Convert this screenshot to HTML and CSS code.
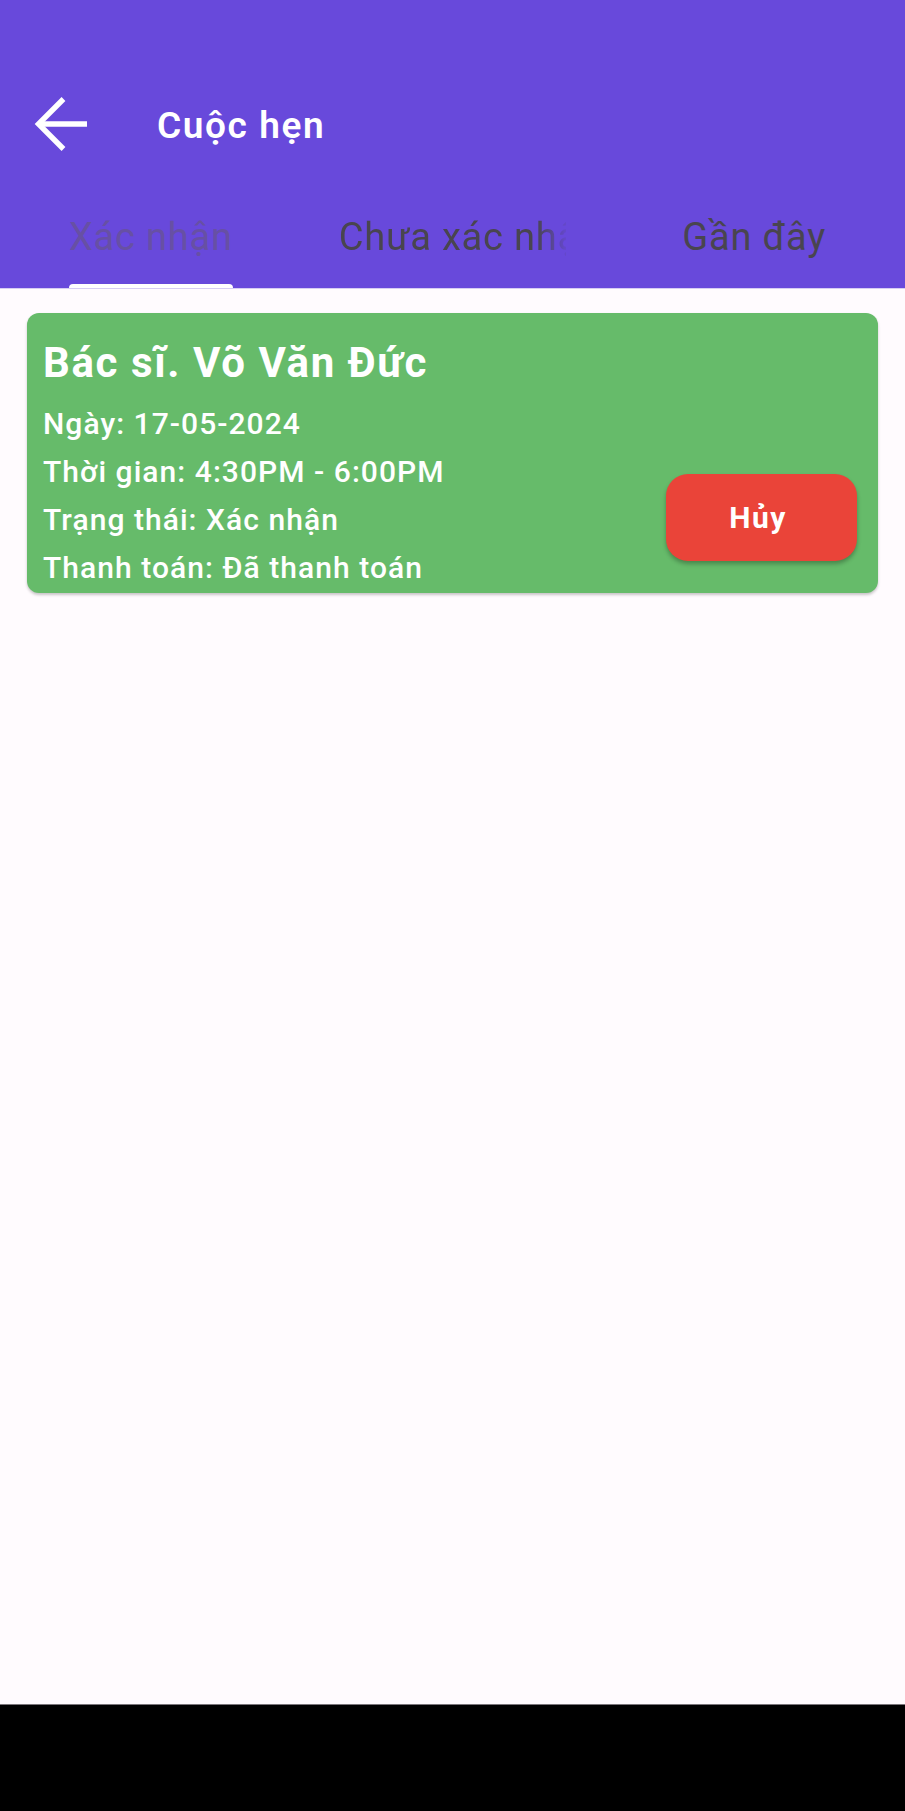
FILE: index.html
```html
<!DOCTYPE html>
<html lang="vi">
<head>
<meta charset="utf-8">
<title>Cuộc hẹn</title>
<link rel="stylesheet" href="styles.css">
</head>
<body>
<div class="screen">
  <header class="appbar">
    <div class="toolbar">
      <svg class="back" width="54" height="54" viewBox="0 0 54 54" aria-hidden="true">
        <path d="M4 27 H53" fill="none" stroke="#fff" stroke-width="5.4"/>
        <path d="M29.5 2 L4.5 27 L29.5 52" fill="none" stroke="#fff" stroke-width="5.4" stroke-linejoin="miter"/>
      </svg>
      <h1 class="title">Cuộc hẹn</h1>
    </div>
    <nav class="tabs">
      <div class="tab active">
        <span class="tab-inner"><span class="label">Xác nhận</span><span class="indicator"></span></span>
      </div>
      <div class="tab">
        <span class="tab-inner"><span class="label fade">Chưa xác nhận</span><span class="indicator"></span></span>
      </div>
      <div class="tab">
        <span class="tab-inner"><span class="label">Gần đây</span><span class="indicator"></span></span>
      </div>
    </nav>
  </header>
  <main class="content">
    <article class="card">
      <div class="info">
        <h2 class="doctor">Bác sĩ. Võ Văn Đức</h2>
        <p class="line">Ngày: 17-05-2024</p>
        <p class="line">Thời gian: 4:30PM - 6:00PM</p>
        <p class="line">Trạng thái: Xác nhận</p>
        <p class="line">Thanh toán: Đã thanh toán</p>
      </div>
      <button class="cancel" type="button">Hủy</button>
    </article>
  </main>
  <div class="navbar"></div>
</div>
</body>
</html>
```

FILE: styles.css
```css
html, body {
  margin: 0;
  padding: 0;
}

body {
  font-family: Roboto, "Noto Sans", "Liberation Sans", sans-serif;
  background: #fffbfe;
}

.screen {
  width: 905px;
  height: 1811px;
  display: flex;
  flex-direction: column;
  overflow: hidden;
}

.appbar {
  background: #6849db;
  padding-top: 76px;
  border-bottom: 1px solid #d6cdf3;
}

.toolbar {
  height: 96px;
  display: flex;
  align-items: center;
}

.back {
  display: block;
  margin-left: 34px;
  flex: none;
}

.title {
  margin: 0 0 0 69px;
  font-size: 37px;
  font-weight: 600;
  letter-spacing: 1.6px;
  color: #ffffff;
  position: relative;
  top: 1px;
}

.tabs {
  height: 116px;
  display: flex;
}

.tab {
  flex: 1 1 0;
  min-width: 0;
  padding: 0 37px;
  display: flex;
  justify-content: center;
}

.tab-inner {
  display: flex;
  flex-direction: column;
  justify-content: space-between;
  max-width: 100%;
  min-width: 0;
  padding-top: 43px;
  box-sizing: border-box;
}

.label {
  display: block;
  font-size: 38px;
  letter-spacing: 0.8px;
  line-height: normal;
  white-space: nowrap;
  overflow: hidden;
  color: #49454f;
}

.tab.active .label {
  color: #6750a4;
}

.fade {
  -webkit-mask-image: linear-gradient(to right, #000 calc(100% - 30px), rgba(0, 0, 0, 0.1));
  mask-image: linear-gradient(to right, #000 calc(100% - 30px), rgba(0, 0, 0, 0.1));
}

.indicator {
  display: block;
  height: 4px;
  border-radius: 4px 4px 0 0;
  background: transparent;
}

.tab.active .indicator {
  background: #ffffff;
}

.content {
  flex: 1;
  padding-top: 24px;
}

.card {
  margin: 0 27px;
  padding: 27px 21px 1px 16px;
  background: #66bb6a;
  border-radius: 12px;
  box-shadow: 0 2px 3px rgba(0, 0, 0, 0.22);
  display: flex;
  justify-content: space-between;
  align-items: flex-end;
  color: #ffffff;
}

.doctor {
  margin: 0 0 14px;
  font-size: 42px;
  font-weight: 700;
  letter-spacing: 1.6px;
  line-height: 46px;
}

.line {
  margin: 0;
  font-size: 30px;
  font-weight: 500;
  letter-spacing: 1.05px;
  line-height: 48px;
}

.cancel {
  width: 191px;
  height: 87px;
  margin-bottom: 31px;
  border: none;
  border-radius: 22px;
  background: #ea4439;
  color: #ffffff;
  font-family: Roboto, "Noto Sans", "Liberation Sans", sans-serif;
  font-size: 30px;
  font-weight: 700;
  letter-spacing: 1.4px;
  box-shadow: 0 3px 4px rgba(0, 0, 0, 0.28);
  padding: 0 7px 0 0;
}

.navbar {
  height: 106px;
  background: #000000;
  border-top: 1px solid #7a757a;
  flex: none;
}
```
